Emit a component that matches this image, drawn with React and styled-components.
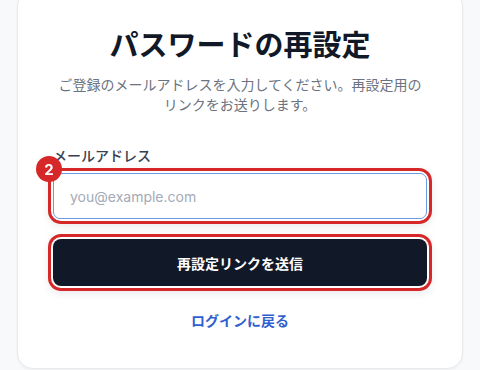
import React from 'react'
import styled, { createGlobalStyle } from 'styled-components'

const GlobalStyle = createGlobalStyle`
  html, body {
    margin: 0;
    padding: 0;
    background: #f8f9fb;
    font-family: Inter, "Noto Sans CJK JP", sans-serif;
  }
  * { box-sizing: border-box; }
`

const Page = styled.div`
  width: 480px;
  height: 370px;
  overflow: hidden;
  display: flex;
  justify-content: center;
`

const Card = styled.div`
  width: 446px;
  margin-top: -10px;
  align-self: flex-start;
  background: #ffffff;
  border: 1px solid #e8eaee;
  border-radius: 16px;
  box-shadow: 0 1px 3px rgba(0, 0, 0, 0.05);
  padding: 36px 35px 37px;
  display: flex;
  flex-direction: column;
`

const Title = styled.h1`
  margin: 0;
  font-size: 29px;
  line-height: 38px;
  font-weight: 700;
  color: #111827;
  text-align: center;
`

const Subtitle = styled.p`
  margin: 10px 0 0;
  font-size: 14px;
  line-height: 20px;
  color: #6b7280;
  text-align: center;
`

const Form = styled.form`
  margin-top: 31px;
  display: flex;
  flex-direction: column;
`

const Label = styled.label`
  font-size: 14px;
  line-height: 20px;
  font-weight: 500;
  color: #374151;
  margin-bottom: 7px;
`

const Marked = styled.div`
  position: relative;
  border-radius: 8px;
  outline: 3px solid #d62828;
  outline-offset: 2px;
  box-shadow: 0 0 0 5px #fff, 0 3px 10px 5px rgba(0, 0, 0, 0.08);
`

const Badge = styled.span`
  position: absolute;
  left: -17px;
  top: -17px;
  width: 26px;
  height: 26px;
  border-radius: 50%;
  background: #d62828;
  color: #fff;
  font-size: 15px;
  font-weight: 700;
  display: flex;
  align-items: center;
  justify-content: center;
  z-index: 2;
`

const Input = styled.input`
  display: block;
  width: 100%;
  height: 46px;
  border: 1px solid #6c9ae6;
  border-radius: 7px;
  padding: 0 16px;
  font-family: inherit;
  font-size: 14px;
  color: #111827;
  background: #fff;
  outline: none;
  &::placeholder { color: #a3aab6; }
`

const Button = styled.button`
  display: block;
  width: 100%;
  height: 47px;
  border: none;
  border-radius: 8px;
  background: #111827;
  color: #fff;
  font-family: inherit;
  font-size: 14px;
  font-weight: 700;
  cursor: pointer;
`

const ButtonWrap = styled(Marked)`
  margin-top: 20px;
`

const BackLink = styled.a`
  margin-top: 25px;
  align-self: center;
  font-size: 14px;
  line-height: 20px;
  font-weight: 700;
  color: #2f5fd0;
  text-decoration: none;
`

export default function App() {
  return (
    <>
      <GlobalStyle />
      <Page>
        <Card>
          <Title>パスワードの再設定</Title>
          <Subtitle>
            ご登録のメールアドレスを入力してください。再設定用の
            <br />
            リンクをお送りします。
          </Subtitle>
          <Form onSubmit={e => e.preventDefault()}>
            <Label htmlFor="email">メールアドレス</Label>
            <Marked>
              <Badge>2</Badge>
              <Input id="email" type="email" placeholder="you@example.com" autoFocus />
            </Marked>
            <ButtonWrap>
              <Button type="submit">再設定リンクを送信</Button>
            </ButtonWrap>
            <BackLink href="#">ログインに戻る</BackLink>
          </Form>
        </Card>
      </Page>
    </>
  )
}
